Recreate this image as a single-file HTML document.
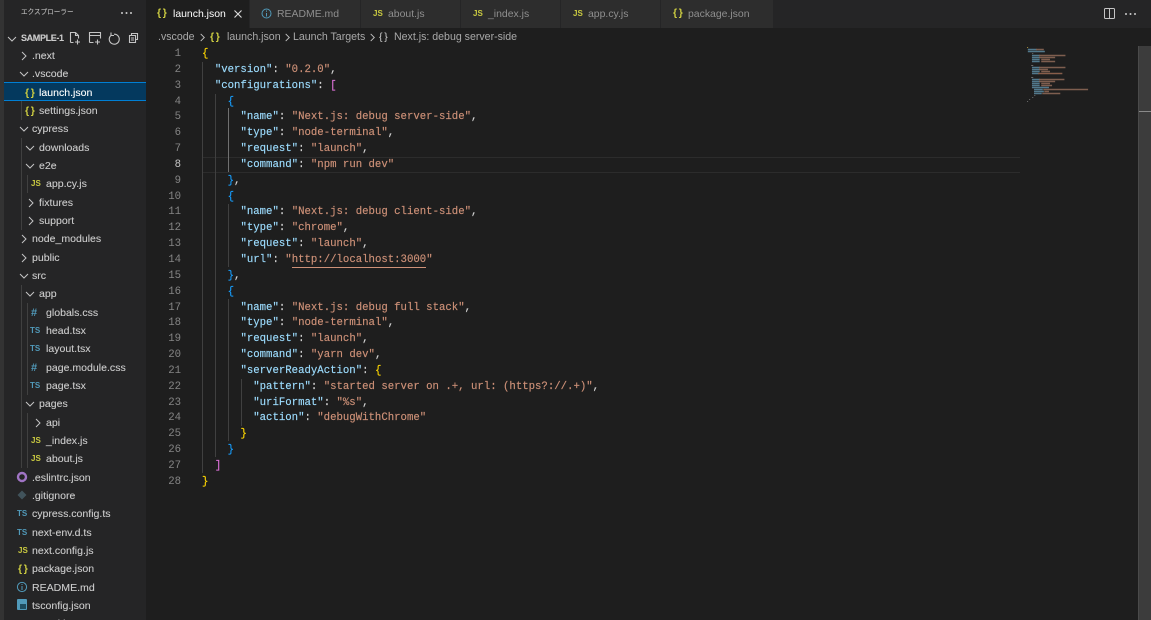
<!DOCTYPE html>
<html><head><meta charset="utf-8">
<style>
html,body{margin:0;padding:0;width:1151px;height:620px;overflow:hidden;background:#1e1e1e;font-family:"Liberation Sans","Noto Sans CJK JP",sans-serif;color:#ccc}
#app{position:relative;width:1151px;height:620px;overflow:hidden}
.abs,.r,.t,.ic,.ch{position:absolute}
.r,.ic,.ch{margin-top:1px}
#act{left:0;top:0;width:4px;height:620px;background:#333;position:absolute}
#side{position:absolute;left:4px;top:0;width:142px;height:620px;background:#252526}
.r{font-size:10.55px;line-height:18px;height:18px;white-space:nowrap;color:#ccc;-webkit-text-stroke:.1px}
.ic{font-weight:bold;line-height:18px;white-space:nowrap}
.js{color:#cbcb41;font-size:8px}.ts{color:#519aba;font-size:8px}.hs{color:#519aba;font-size:11px}.br{color:#cbcb41;font-size:10.5px;letter-spacing:-.6px;margin-left:1px}
.ch{width:10px;height:10px}
.g{position:absolute;width:1px;background:#404040}
#tabs{position:absolute;left:146px;top:0;width:1005px;height:28px;background:#252526}
.t{top:0;height:28px;background:#2d2d2d;color:#8f8f8f;font-size:10.45px;line-height:29px;white-space:nowrap}
.t b{position:absolute;top:0;line-height:27px;font-weight:bold}
.t b.br{margin-left:0}
.t span{position:absolute;top:0}
#bc{position:absolute;left:158px;top:28px;height:18px;line-height:18px;font-size:10.6px;color:#a9a9a9;white-space:nowrap;width:600px}
#bc span{position:absolute;top:0}
#ln{position:absolute;left:146px;top:47px;width:35px;text-align:right;font:10.68px/15.85px "Liberation Mono",monospace;color:#858585}
#code{position:absolute;left:202px;top:47px;font:10.68px/15.85px "Liberation Mono",monospace;color:#d4d4d4;white-space:pre;-webkit-text-stroke:.15px}
.k{color:#9cdcfe}.s{color:#ce9178}.y{color:#ffd700}.p{color:#da70d6}.b{color:#179fff}
.u{border-bottom:1px solid #ce9178;display:inline-block;line-height:14px}
</style></head>
<body><div id="app">
<div id="act"></div>
<div id="side"></div>

<div class="r" style="left:21px;top:3px;font-size:6.6px;color:#bbb">エクスプローラー</div>
<svg class="abs" style="left:120px;top:9px" width="14" height="8"><circle cx="2" cy="4" r="1" fill="#ccc"/><circle cx="6.5" cy="4" r="1" fill="#ccc"/><circle cx="11" cy="4" r="1" fill="#ccc"/></svg>

<svg width="0" height="0" style="position:absolute"><defs>
<symbol id="cr" viewBox="0 0 10 10"><path d="M3 1l4 4-4 4" fill="none" stroke="#c5c5c5" stroke-width="1"/></symbol>
<symbol id="cd" viewBox="0 0 10 10"><path d="M1 3l4 4 4-4" fill="none" stroke="#c5c5c5" stroke-width="1"/></symbol>
</defs></svg>

<svg class="ch" style="left:7px;top:33px"><use href="#cd"/></svg>
<div class="r" style="left:21px;top:28px;font-weight:bold;font-size:9px;letter-spacing:-.35px;color:#ccc">SAMPLE-1</div>
<svg class="abs" style="left:68px;top:30px" width="80" height="16" fill="none" stroke="#c5c5c5" stroke-width="1.1">
<path d="M2.5 12.5V2.5h5l3 3v3M7.5 2.5v3h3M2.5 12.5h3"/><path d="M9.5 9.5v5M7 12h5"/>
<path d="M21.5 12.5v-10h11v6M21.5 5.5h11M21.5 12.5h4" /><path d="M29.5 9.5v5M27 12h5"/>
<path d="M46 4.2a5 5 0 1 1-3 1.2M43 2.5v3h3"/>
<path d="M61.5 5.5h6v7h-6zM63.5 5.5v-2h6v6h-2M63 8h3M63 10h3"/>
</svg>

<!-- tree guides -->
<div class="g" style="left:21px;top:83px;height:37px"></div>
<div class="g" style="left:21px;top:138px;height:92px"></div>
<div class="g" style="left:27px;top:175px;height:18px"></div>
<div class="g" style="left:21px;top:285px;height:183px"></div>
<div class="g" style="left:27px;top:303px;height:92px"></div>
<div class="g" style="left:27px;top:413px;height:55px"></div>

<!-- selected -->
<div class="abs" style="left:4px;top:82px;width:142px;height:19px;background:#04395e;border-top:1px solid #007fd4;border-bottom:1px solid #007fd4;box-sizing:border-box"></div>

<svg class="ch" style="left:19px;top:50px"><use href="#cr"/></svg><div class="r" style="left:32px;top:46px">.next</div>
<svg class="ch" style="left:19px;top:68px"><use href="#cd"/></svg><div class="r" style="left:32px;top:64px">.vscode</div>
<div class="ic br" style="left:24px;top:83px">{ }</div><div class="r" style="left:39px;top:83px;color:#fff">launch.json</div>
<div class="ic br" style="left:24px;top:101px">{ }</div><div class="r" style="left:39px;top:101px">settings.json</div>
<svg class="ch" style="left:19px;top:123px"><use href="#cd"/></svg><div class="r" style="left:32px;top:119px">cypress</div>
<svg class="ch" style="left:25px;top:142px"><use href="#cd"/></svg><div class="r" style="left:39px;top:138px">downloads</div>
<svg class="ch" style="left:25px;top:160px"><use href="#cd"/></svg><div class="r" style="left:39px;top:156px">e2e</div>
<div class="ic js" style="left:31px;top:174px">JS</div><div class="r" style="left:46px;top:174px">app.cy.js</div>
<svg class="ch" style="left:26px;top:197px"><use href="#cr"/></svg><div class="r" style="left:39px;top:193px">fixtures</div>
<svg class="ch" style="left:26px;top:215px"><use href="#cr"/></svg><div class="r" style="left:39px;top:211px">support</div>
<svg class="ch" style="left:19px;top:233px"><use href="#cr"/></svg><div class="r" style="left:32px;top:229px">node_modules</div>
<svg class="ch" style="left:19px;top:252px"><use href="#cr"/></svg><div class="r" style="left:32px;top:248px">public</div>
<svg class="ch" style="left:19px;top:270px"><use href="#cd"/></svg><div class="r" style="left:32px;top:266px">src</div>
<svg class="ch" style="left:25px;top:288px"><use href="#cd"/></svg><div class="r" style="left:39px;top:284px">app</div>
<div class="ic hs" style="left:31px;top:303px">#</div><div class="r" style="left:46px;top:303px">globals.css</div>
<div class="ic ts" style="left:30px;top:321px">TS</div><div class="r" style="left:46px;top:321px">head.tsx</div>
<div class="ic ts" style="left:30px;top:339px">TS</div><div class="r" style="left:46px;top:339px">layout.tsx</div>
<div class="ic hs" style="left:31px;top:358px">#</div><div class="r" style="left:46px;top:358px">page.module.css</div>
<div class="ic ts" style="left:30px;top:376px">TS</div><div class="r" style="left:46px;top:376px">page.tsx</div>
<svg class="ch" style="left:25px;top:398px"><use href="#cd"/></svg><div class="r" style="left:39px;top:394px">pages</div>
<svg class="ch" style="left:33px;top:417px"><use href="#cr"/></svg><div class="r" style="left:46px;top:413px">api</div>
<div class="ic js" style="left:31px;top:431px">JS</div><div class="r" style="left:46px;top:431px">_index.js</div>
<div class="ic js" style="left:31px;top:449px">JS</div><div class="r" style="left:46px;top:449px">about.js</div>
<svg class="abs" style="left:16px;top:471px" width="13" height="13"><circle cx="6" cy="6" r="4" fill="none" stroke="#a074c4" stroke-width="2.4"/></svg><div class="r" style="left:32px;top:468px">.eslintrc.json</div>
<svg class="abs" style="left:16px;top:489px" width="13" height="13"><path d="M6 1.5L10.5 6 6 10.5 1.5 6z" fill="#41535b"/></svg><div class="r" style="left:32px;top:486px">.gitignore</div>
<div class="ic ts" style="left:17px;top:504px">TS</div><div class="r" style="left:32px;top:504px">cypress.config.ts</div>
<div class="ic ts" style="left:17px;top:523px">TS</div><div class="r" style="left:32px;top:523px">next-env.d.ts</div>
<div class="ic js" style="left:18px;top:541px">JS</div><div class="r" style="left:32px;top:541px">next.config.js</div>
<div class="ic br" style="left:17px;top:559px">{ }</div><div class="r" style="left:32px;top:559px">package.json</div>
<svg class="abs" style="left:16px;top:581px" width="13" height="13"><circle cx="6" cy="6" r="4.6" fill="none" stroke="#519aba" stroke-width="1"/><path d="M6 5v4M6 3v1" stroke="#519aba"/></svg><div class="r" style="left:32px;top:578px">README.md</div>
<svg class="abs" style="left:17px;top:599px" width="11" height="12"><rect x="0" y="0" width="10" height="11" rx="1" fill="#519aba"/><rect x="3" y="5" width="6" height="5" fill="#1f4d60"/></svg><div class="r" style="left:32px;top:596px">tsconfig.json</div>
<div class="r" style="left:32px;top:614px">vercel.json</div>

<!-- tabs -->
<div id="tabs"></div>
<div class="t" style="left:146px;width:103px;background:#1e1e1e;color:#fff"><b class="br" style="left:11px">{ }</b><span style="left:27px">launch.json</span>
<svg class="abs" style="left:87px;top:9px" width="10" height="10"><path d="M1.5 1.5l7 7M8.5 1.5l-7 7" stroke="#ddd" stroke-width="1.1"/></svg></div>
<div class="t" style="left:250px;width:110px"><svg class="abs" style="left:11px;top:8px" width="12" height="12"><circle cx="5.5" cy="5.5" r="4.5" fill="none" stroke="#519aba"/><path d="M5.5 5v3.500M5.500 2.500v1.200" stroke="#519aba"/></svg><span style="left:27px">README.md</span></div>
<div class="t" style="left:361px;width:99px"><b style="left:12px;color:#cbcb41;font-size:8px">JS</b><span style="left:27px">about.js</span></div>
<div class="t" style="left:461px;width:99px"><b style="left:12px;color:#cbcb41;font-size:8px">JS</b><span style="left:27px">_index.js</span></div>
<div class="t" style="left:561px;width:99px"><b style="left:12px;color:#cbcb41;font-size:8px">JS</b><span style="left:27px">app.cy.js</span></div>
<div class="t" style="left:661px;width:112px"><b class="br" style="left:12px">{ }</b><span style="left:27px">package.json</span></div>
<svg class="abs" style="left:1103px;top:7px" width="13" height="13" fill="none" stroke="#c5c5c5"><rect x="1.500" y="1.500" width="10" height="10" rx="1"/><path d="M6.500 1.500v10" /></svg>
<svg class="abs" style="left:1124px;top:10px" width="14" height="8"><circle cx="2" cy="4" r="1" fill="#ccc"/><circle cx="6.500" cy="4" r="1" fill="#ccc"/><circle cx="11" cy="4" r="1" fill="#ccc"/></svg>

<!-- breadcrumb -->
<div id="bc"><span style="left:0">.vscode</span><svg class="abs" style="left:40px;top:5px" width="9" height="9"><use href="#cr"/></svg>
<span class="br" style="left:52px;margin-left:0;font-weight:bold">{ }</span><span style="left:69px">launch.json</span><svg class="abs" style="left:125px;top:5px" width="9" height="9"><use href="#cr"/></svg>
<span style="left:135px">Launch Targets</span><svg class="abs" style="left:210px;top:5px" width="9" height="9"><use href="#cr"/></svg>
<span style="left:221px;color:#ccc;font-size:10.5px;letter-spacing:-.6px">{ }</span><span style="left:236px">Next.js: debug server-side</span></div>

<!-- current line -->
<div class="abs" style="left:202px;top:157px;width:818px;height:16px;border-top:1px solid #2c2c2c;border-bottom:1px solid #2c2c2c;box-sizing:border-box"></div>

<!-- line numbers -->
<div id="ln">1<br>2<br>3<br>4<br>5<br>6<br>7<br><span style="color:#c6c6c6">8</span><br>9<br>10<br>11<br>12<br>13<br>14<br>15<br>16<br>17<br>18<br>19<br>20<br>21<br>22<br>23<br>24<br>25<br>26<br>27<br>28</div>

<!-- indent guides -->
<div class="g" style="left:202px;top:62px;height:411px"></div>
<div class="g" style="left:215px;top:94px;height:363px"></div>
<div class="g" style="left:228px;top:108px;height:64px;background:#707070"></div>
<div class="g" style="left:228px;top:204px;height:63px"></div>
<div class="g" style="left:228px;top:299px;height:142px"></div>
<div class="g" style="left:241px;top:379px;height:47px"></div>

<!-- code -->
<div id="code"><span class="y">{</span>
  <span class="k">"version"</span>: <span class="s">"0.2.0"</span>,
  <span class="k">"configurations"</span>: <span class="p">[</span>
    <span class="b">{</span>
      <span class="k">"name"</span>: <span class="s">"Next.js: debug server-side"</span>,
      <span class="k">"type"</span>: <span class="s">"node-terminal"</span>,
      <span class="k">"request"</span>: <span class="s">"launch"</span>,
      <span class="k">"command"</span>: <span class="s">"npm run dev"</span>
    <span class="b">}</span>,
    <span class="b">{</span>
      <span class="k">"name"</span>: <span class="s">"Next.js: debug client-side"</span>,
      <span class="k">"type"</span>: <span class="s">"chrome"</span>,
      <span class="k">"request"</span>: <span class="s">"launch"</span>,
      <span class="k">"url"</span>: <span class="s">"<span class="u">http://localhost:3000</span>"</span>
    <span class="b">}</span>,
    <span class="b">{</span>
      <span class="k">"name"</span>: <span class="s">"Next.js: debug full stack"</span>,
      <span class="k">"type"</span>: <span class="s">"node-terminal"</span>,
      <span class="k">"request"</span>: <span class="s">"launch"</span>,
      <span class="k">"command"</span>: <span class="s">"yarn dev"</span>,
      <span class="k">"serverReadyAction"</span>: <span class="y">{</span>
        <span class="k">"pattern"</span>: <span class="s">"started server on .+, url: (https?://.+)"</span>,
        <span class="k">"uriFormat"</span>: <span class="s">"%s"</span>,
        <span class="k">"action"</span>: <span class="s">"debugWithChrome"</span>
      <span class="y">}</span>
    <span class="b">}</span>
  <span class="p">]</span>
<span class="y">}</span></div>

<!-- minimap -->
<svg class="abs" style="left:1024px;top:46px" width="70" height="58">
<g transform="translate(1 0) scale(1.03 1)">
<g fill="#5d8aa0" stroke="#5d8aa0" stroke-width=".5" opacity=".85">
<rect x="3" y="3" width="8" height="1"/><rect x="3" y="5" width="16" height="1"/>
<rect x="7" y="9" width="7" height="1"/><rect x="7" y="11" width="7" height="1"/><rect x="7" y="13" width="7" height="1"/><rect x="7" y="15" width="7" height="1"/>
<rect x="7" y="21" width="7" height="1"/><rect x="7" y="23" width="7" height="1"/><rect x="7" y="25" width="7" height="1"/><rect x="7" y="27" width="6" height="1"/>
<rect x="7" y="33" width="7" height="1"/><rect x="7" y="35" width="7" height="1"/><rect x="7" y="37" width="7" height="1"/><rect x="7" y="39" width="7" height="1"/><rect x="7" y="41" width="16" height="1"/>
<rect x="9" y="43" width="8" height="1"/><rect x="9" y="45" width="9" height="1"/><rect x="9" y="47" width="7" height="1"/>
</g>
<g fill="#8f6a58" stroke="#8f6a58" stroke-width=".5" opacity=".85">
<rect x="11" y="3" width="7" height="1"/>
<rect x="14" y="9" width="25" height="1"/><rect x="14" y="11" width="15" height="1"/><rect x="16" y="13" width="8" height="1"/><rect x="16" y="15" width="13" height="1"/>
<rect x="14" y="21" width="25" height="1"/><rect x="14" y="23" width="8" height="1"/><rect x="16" y="25" width="8" height="1"/><rect x="13" y="27" width="23" height="1" fill="#a8694a"/>
<rect x="14" y="33" width="24" height="1"/><rect x="14" y="35" width="15" height="1"/><rect x="16" y="37" width="8" height="1"/><rect x="16" y="39" width="10" height="1"/>
<rect x="18" y="43" width="43" height="1"/><rect x="19" y="45" width="4" height="1"/><rect x="17" y="47" width="17" height="1"/>
</g>
<g fill="#6b6b6b"><rect x="2" y="1" width="1" height="1" fill="#a08a40"/><rect x="7" y="7" width="1" height="1"/><rect x="6" y="19" width="2" height="1"/><rect x="6" y="31" width="2" height="1"/><rect x="9" y="49" width="1" height="1"/><rect x="7" y="51" width="1" height="1"/><rect x="4" y="53" width="1" height="1"/><rect x="2" y="55" width="1" height="1"/></g>
</g>
</svg>

<!-- scrollbar -->
<div class="abs" style="left:1138px;top:46px;width:13px;height:574px;background:#3c3c3c;border-left:1px solid #4a4a4a;box-sizing:border-box"></div>
<div class="abs" style="left:1139px;top:111px;width:12px;height:1px;background:#8a8a8a"></div>
</div></body></html>
